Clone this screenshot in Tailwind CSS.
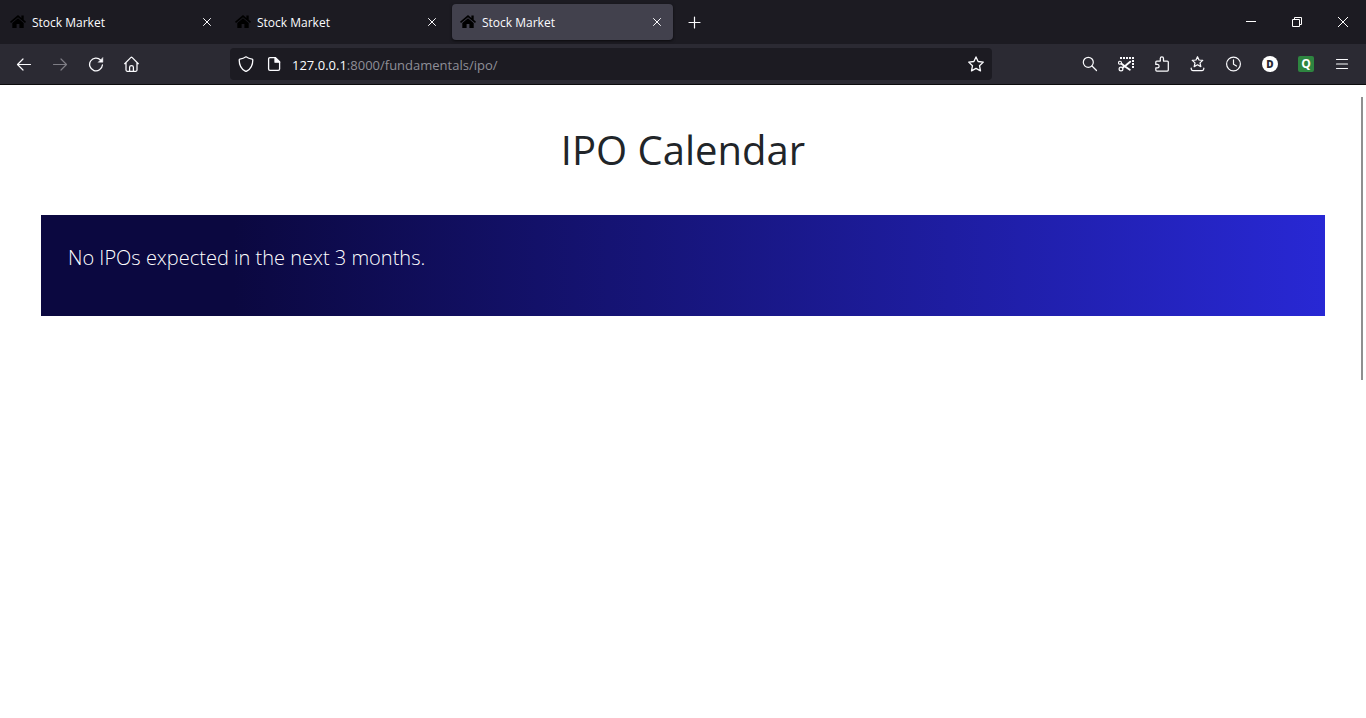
<!DOCTYPE html>
<html lang="en">
<head>
<meta charset="utf-8">
<meta name="viewport" content="width=device-width, initial-scale=1">
<title>Stock Market</title>
<script src="https://cdn.jsdelivr.net/npm/@tailwindcss/browser@4"></script>
</head>
<body class="flex min-h-screen flex-col bg-white font-['Open_Sans',sans-serif]">
<svg class="hidden" aria-hidden="true">
  <symbol id="house" viewBox="0 0 16 16"><path fill="#000" d="M8 1 0 7.800l1 1.300L8 3.300l7 5.800 1-1.300-2.300-2V1.500h-2.300v2.400zM8 4.300 2.300 9V14h4.300v-4h2.800v4h4.300V9z"/></symbol>
  <symbol id="cross" viewBox="0 0 16 16"><path d="m4.500 4.500 7 7m0-7-7 7" fill="none" stroke="currentColor" stroke-width="1" stroke-linecap="round"/></symbol>
</svg>

<header class="text-[#fbfbfe]">
  <div class="flex h-11 bg-[#1c1b22]">
    <nav class="flex items-center gap-1 pl-0.5" aria-label="Tabs">
      <div class="flex h-9 w-[221px] items-center rounded px-2">
        <svg class="mr-1.5 size-4"><use href="#house"/></svg>
        <a href="#" class="grow pt-0.5 text-xs">Stock Market</a>
        <button aria-label="Close tab" class="size-4"><svg class="size-4"><use href="#cross"/></svg></button>
      </div>
      <div class="flex h-9 w-[221px] items-center rounded px-2">
        <svg class="mr-1.5 size-4"><use href="#house"/></svg>
        <a href="#" class="grow pt-0.5 text-xs">Stock Market</a>
        <button aria-label="Close tab" class="size-4"><svg class="size-4"><use href="#cross"/></svg></button>
      </div>
      <div class="flex h-9 w-[221px] items-center rounded bg-[#42414d] px-2 shadow-sm shadow-black/50">
        <svg class="mr-1.5 size-4"><use href="#house"/></svg>
        <a href="#" aria-current="page" class="grow pt-0.5 text-xs">Stock Market</a>
        <button aria-label="Close tab" class="size-4"><svg class="size-4"><use href="#cross"/></svg></button>
      </div>
      <button aria-label="New tab" class="flex size-9 items-center justify-center">
        <svg class="size-4" viewBox="0 0 16 16" fill="none" stroke="currentColor" stroke-width="1.200" stroke-linecap="round"><path d="M7.500 3v11M2 8.500h11"/></svg>
      </button>
    </nav>
    <div class="ml-auto flex">
      <button aria-label="Minimize" class="flex w-[46px] items-center justify-center"><svg class="size-3" viewBox="0 0 12 12"><path d="M1 5h10v1H1z" fill="#fff"/></svg></button>
      <button aria-label="Restore" class="flex w-[46px] items-center justify-center"><svg class="size-3" viewBox="0 0 12 12" fill="none" stroke="#fff"><path d="M1.500 3.500h7v7h-7zM3.500 3.500v-2h7v7h-2"/></svg></button>
      <button aria-label="Close window" class="flex w-[46px] items-center justify-center"><svg class="size-3" viewBox="0 0 12 12" stroke="#fff" stroke-width="1"><path d="m1 1 10 10M11 1 1 11"/></svg></button>
    </div>
  </div>

  <div class="flex h-[41px] items-center border-b border-[#0c0c0d] bg-[#2b2a33]">
    <div class="flex w-[230px] shrink-0 pl-1.5">
      <button aria-label="Back" class="flex h-8 w-9 items-center justify-center"><svg class="size-4" viewBox="0 0 16 16" fill="none" stroke="currentColor" stroke-width="1.200" stroke-linecap="round" stroke-linejoin="round"><path d="M14.500 8.500h-13M7 3 1.500 8.500 7 14"/></svg></button>
      <button aria-label="Forward" disabled class="flex h-8 w-9 items-center justify-center text-[#7e7d85]"><svg class="size-4" viewBox="0 0 16 16" fill="none" stroke="currentColor" stroke-width="1.200" stroke-linecap="round" stroke-linejoin="round"><path d="M1.500 8.500h13M9 3l5.500 5.500L9 14"/></svg></button>
      <button aria-label="Reload" class="flex h-8 w-9 items-center justify-center"><svg class="size-4" viewBox="0 0 16 16" fill="none" stroke="currentColor" stroke-width="1.300" stroke-linecap="round"><path d="M12.700 4.100A6.400 6.400 0 1 0 14.400 9"/><path d="M14.900 1.700v4.600h-4.600z" fill="currentColor" stroke-width=".4"/></svg></button>
      <button aria-label="Home" class="flex h-8 w-9 items-center justify-center"><svg class="size-4" viewBox="0 0 16 16" fill="none" stroke="currentColor" stroke-width="1.250" stroke-linecap="round" stroke-linejoin="round"><path d="M.7 7.700 6.700 1.600q.8-.7 1.600 0l6 6.100M2 6.600v7.500q0 1.200 1.200 1.200h8.600q1.200 0 1.200-1.200V6.600M5.600 15.200v-4q0-1.500 1.900-1.500t1.900 1.500v4"/></svg></button>
    </div>
    <div class="flex h-8 grow items-center rounded bg-[#1c1b22] px-2">
      <button aria-label="Site protection" class="mr-3 size-4"><svg class="size-4" viewBox="0 0 16 16" fill="none" stroke="currentColor" stroke-width="1.300" stroke-linejoin="round"><path d="M8 .8c1.700 1.200 4.100 2 6.200 2.300q.6.100.6.800c0 4.900-2 9-6.100 11.200q-.7.300-1.400 0C3.200 12.900 1.200 8.800 1.200 3.900q0-.7.600-.8C3.900 2.800 6.300 2 8 .8z"/></svg></button>
      <button aria-label="Site information" class="mr-2.5 size-4"><svg class="size-4" viewBox="0 0 16 16" fill="none" stroke="currentColor" stroke-width="1.300" stroke-linejoin="round"><path d="M9.500 1.600H4Q2.600 1.600 2.600 3v10q0 1.400 1.400 1.400h8.200q1.400 0 1.400-1.400V5.700z"/><path d="M9 1.600v4.600h4.600z" fill="currentColor"/></svg></button>
      <a href="#" class="grow pt-0.5 text-[13px] leading-5 text-[#8f8f98]"><span class="text-[#fbfbfe]">127.0.0.1</span>:8000/fundamentals/ipo/</a>
      <button aria-label="Bookmark this page" class="size-4"><svg class="size-4" viewBox="0 0 16 16" fill="none" stroke="currentColor" stroke-width="1.300" stroke-linejoin="round"><path d="m8 .9 2.100 4.600 5.200.6-3.800 3.600 1 5.200L8 12.400l-4.500 2.500 1-5.200L.7 6.100l5.200-.6z"/></svg></button>
    </div>
    <div class="flex shrink-0 pr-1.5 pl-20">
      <button aria-label="Search" class="flex h-8 w-9 items-center justify-center"><svg class="size-4" viewBox="0 0 16 16" fill="none" stroke="currentColor" stroke-width="1.200" stroke-linecap="round"><circle cx="6.300" cy="6.300" r="5"/><path d="m10 10 4.500 4.500"/></svg></button>
      <button aria-label="Take screenshot" class="flex h-8 w-9 items-center justify-center"><svg class="size-4" viewBox="0 0 16 16" fill="none" stroke="currentColor"><path d="M2 1h2v2H2zM5 1h2v2H5zM8 1h2v2H8zM11 1h2v2h-2zM14 1h2v2h-2zM14 4h2v2h-2zM14 7h2v2h-2zM14 10h2v2h-2z" fill="currentColor" stroke="none"/><circle cx="2" cy="6.800" r="1.500" stroke-width="1.100"/><circle cx="3" cy="13" r="1.900" stroke-width="1.200"/><path d="m3.500 7.700 3.500 2.800 4.800 3.200M4.500 11.700 8 9.300l4.200-3.600" stroke-width="1.900" stroke-linecap="round"/></svg></button>
      <button aria-label="Extensions" class="flex h-8 w-9 items-center justify-center"><svg class="size-4" viewBox="0 0 16 16" fill="none" stroke="currentColor" stroke-width="1.250" stroke-linejoin="round"><path d="M1.800 8V6.100q0-1 1-1h3.500V2.500Q6.300.9 7.900.9t1.600 1.600v2.600h3.800q1 0 1 1v8q0 1-1 1H2.800q-1 0-1-1v-2.200h1.700q1.600 0 1.600-1.700T3.500 8.400H1.800z"/></svg></button>
      <button aria-label="Bookmarks" class="flex h-8 w-9 items-center justify-center"><svg class="size-4" viewBox="0 0 16 16" fill="none" stroke="currentColor" stroke-width="1.250" stroke-linecap="round" stroke-linejoin="round"><path d="m7.500.7 1.500 3.300 3.700.4-2.700 2.500.8 3.700-3.300-1.800-3.300 1.800.8-3.700-2.700-2.500 3.700-.4zM1.200 12v.8q0 1.700 1.600 1.700h9.400q1.600 0 1.600-1.700V12"/></svg></button>
      <button aria-label="History" class="flex h-8 w-9 items-center justify-center"><svg class="size-4" viewBox="0 0 16 16" fill="none" stroke="currentColor" stroke-width="1.200" stroke-linecap="round"><circle cx="7.500" cy="8" r="6.900"/><path d="M7.500 3.800v4.400l3 1.800"/></svg></button>
      <button aria-label="Account D" class="flex h-8 w-9 items-center justify-center"><span class="flex size-4 items-center justify-center rounded-full bg-white text-[10px] leading-4 font-extrabold text-[#2b2a33]">D</span></button>
      <button aria-label="Q extension" class="flex h-8 w-9 items-center justify-center"><span class="flex size-4 items-center justify-center rounded-xs bg-[#2e8540] text-xs leading-4 font-bold text-white">Q</span></button>
      <button aria-label="Menu" class="flex h-8 w-9 items-center justify-center"><svg class="size-4" viewBox="0 0 16 16" stroke="currentColor" stroke-width="1.200" stroke-linecap="round"><path d="M2.500 3.500h11M2.500 8h11M2.500 12.500h11"/></svg></button>
    </div>
  </div>
</header>

<div class="relative grow">
  <main class="px-[41px] pt-[41px]">
    <h1 class="text-center text-[40px] leading-12 text-[#212529]">IPO Calendar</h1>
    <section class="mt-[41px] bg-linear-to-r/srgb from-[#0b0840] from-15% to-[#2828d4] px-[27px] pt-7 pb-[43px]">
      <p class="text-xl leading-[30px] font-light text-white">No IPOs expected in the next 3 months.</p>
    </section>
  </main>
  <div class="absolute top-3 right-[3px] h-[283px] w-0.5 bg-[#8f8f8f]" aria-hidden="true"></div>
</div>
</body>
</html>
